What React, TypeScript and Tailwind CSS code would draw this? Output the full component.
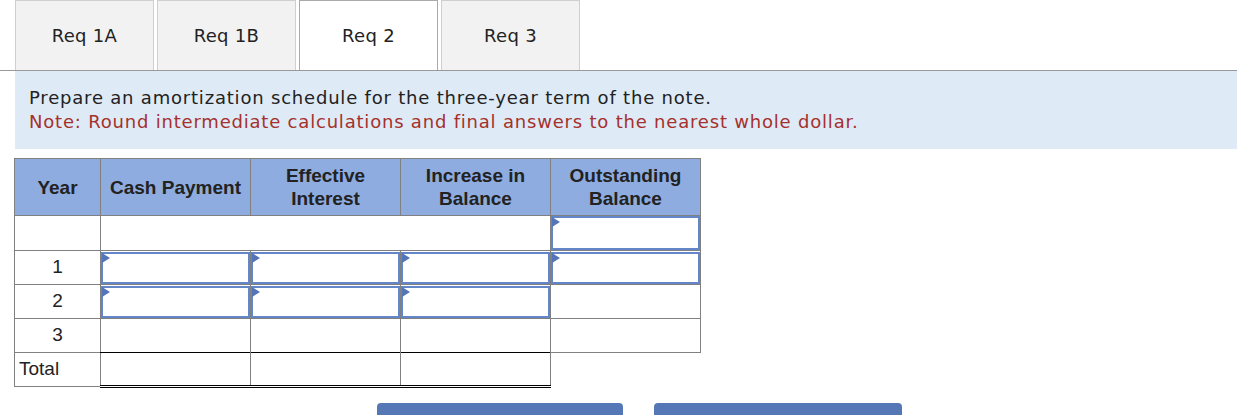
import React from "react";

const TABS = ["Req 1A", "Req 1B", "Req 2", "Req 3"];

function Entry({ h = 32 }: { h?: number }) {
  return (
    <div
      className="relative w-full border-2 border-[#6386c8] bg-white"
      style={{ height: h }}
    >
      <span className="absolute left-[-1px] top-[-1px] h-0 w-0 border-y-[5px] border-l-[8px] border-y-transparent border-l-[#5475b8]" />
    </div>
  );
}

const cell = "border border-[#808080] p-0";
const inputCell = "border border-[#808080] p-0";
const totalCell =
  "border border-double border-x-[#808080] border-t-black border-b-[3px] border-b-black p-0";

export default function App() {
  return (
    <div className="h-[415px] w-[1237px] overflow-hidden bg-white font-['DejaVu_Sans',Verdana,sans-serif]">
      <div className="flex gap-[3px] border-b border-[#999] pl-[15px]">
        {TABS.map((t) => (
          <div
            key={t}
            className={
              t === "Req 2"
                ? "flex h-[70px] w-[139px] items-center justify-center border border-b-0 border-[#aaa] bg-white text-[18px] tracking-[0.3px] text-[#222]"
                : "flex h-[70px] w-[139px] items-center justify-center border border-b-0 border-[#cfcfcf] bg-[#f2f2f2] text-[18px] tracking-[0.3px] text-[#222]"
            }
          >
            {t}
          </div>
        ))}
      </div>

      <div className="ml-[15px] bg-[#dfeaf7] px-[14px] py-[15px] text-[18px] leading-[24px] tracking-[0.8px]">
        <p className="text-[#222]">
          Prepare an amortization schedule for the three-year term of the note.
        </p>
        <p className="text-[#a5312b]">
          Note: Round intermediate calculations and final answers to the nearest whole dollar.
        </p>
      </div>

      <table className="ml-[14px] mt-[9px] border-collapse font-['Liberation_Sans',Arial,sans-serif] text-[19px] text-[#222]">
        <thead>
          <tr className="h-[57px] bg-[#8eacdf] font-bold leading-[23px]">
            <th className={`${cell} w-[86px] px-1`}>Year</th>
            <th className={`${cell} w-[150px] px-1`}>Cash Payment</th>
            <th className={`${cell} w-[150px] px-1`}>
              Effective
              <br />
              Interest
            </th>
            <th className={`${cell} w-[150px] px-1`}>
              Increase in
              <br />
              Balance
            </th>
            <th className={`${cell} w-[150px] px-1`}>
              Outstanding
              <br />
              Balance
            </th>
          </tr>
        </thead>
        <tbody className="text-center">
          <tr className="h-[35px]">
            <td className={cell}></td>
            <td className={cell} colSpan={3}></td>
            <td className={inputCell}>
              <Entry h={34} />
            </td>
          </tr>
          <tr className="h-[34px]">
            <td className={cell}>1</td>
            <td className={inputCell}>
              <Entry />
            </td>
            <td className={inputCell}>
              <Entry />
            </td>
            <td className={inputCell}>
              <Entry />
            </td>
            <td className={inputCell}>
              <Entry />
            </td>
          </tr>
          <tr className="h-[34px]">
            <td className={cell}>2</td>
            <td className={inputCell}>
              <Entry />
            </td>
            <td className={inputCell}>
              <Entry />
            </td>
            <td className={inputCell}>
              <Entry />
            </td>
            <td className={cell}></td>
          </tr>
          <tr className="h-[34px]">
            <td className={cell}>3</td>
            <td className={cell}></td>
            <td className={cell}></td>
            <td className={cell}></td>
            <td className={cell}></td>
          </tr>
          <tr className="h-[34px]">
            <td className={`${cell} px-[4px] text-left`}>Total</td>
            <td className={totalCell}></td>
            <td className={totalCell}></td>
            <td className={totalCell}></td>
          </tr>
        </tbody>
      </table>

      <div className="mt-[15px] flex gap-[31px] pl-[377px]">
        <div className="h-[40px] w-[246px] rounded-[4px] bg-[#5577b5]" />
        <div className="h-[40px] w-[248px] rounded-[4px] bg-[#5577b5]" />
      </div>
    </div>
  );
}
